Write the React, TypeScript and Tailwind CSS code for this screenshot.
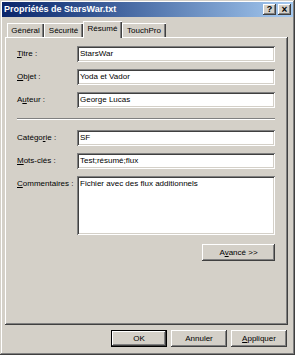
import React from 'react';

const RAISED = 'shadow-[inset_-1px_-1px_#404040,inset_1px_1px_#ffffff,inset_-2px_-2px_#808080]';
const SUNKEN = 'shadow-[inset_1px_1px_#808080,inset_-1px_-1px_#ffffff,inset_2px_2px_#404040,inset_-2px_-2px_#d4d0c8]';
const TAB = 'shadow-[inset_1px_1px_#ffffff,inset_-1px_0_#404040,inset_-2px_0_#808080]';

const FONT = { fontFamily: '"Liberation Sans", Arial, sans-serif' };

const Key = ({ c }: { c: string }) => <span className="underline underline-offset-[1px]">{c}</span>;

const Field = ({ label, value, tall }: { label: React.ReactNode; value: string; tall?: boolean }) => (
  <div className="flex">
    <div className={`w-[60px] shrink-0 whitespace-nowrap ${tall ? 'pt-[4px]' : 'h-[16px] flex items-center'}`}>{label}</div>
    <div className={`flex-1 bg-white ${SUNKEN} px-[3px] whitespace-nowrap ${tall ? 'h-[59px] pt-[4px]' : 'h-[16px] flex items-center'}`}>
      {value}
    </div>
  </div>
);

const Btn = ({ children, w, def }: { children: React.ReactNode; w: string; def?: boolean }) => (
  <div className={`${w} h-[17px] ${def ? 'border border-black' : ''}`}>
    <div className={`h-full w-full flex items-center justify-center ${RAISED}`}>{children}</div>
  </div>
);

export default function App() {
  const tabs = [
    { name: 'Général', w: 'w-[37px]' },
    { name: 'Sécurité', w: 'w-[39px]' },
    { name: 'Résumé', w: 'w-[39px]', active: true },
    { name: 'TouchPro', w: 'w-[44px]' },
  ];

  return (
    <div
      className="w-[295px] h-[355px] bg-[#d4d0c8] p-[2px] flex flex-col text-[8px] text-black leading-none shadow-[inset_-1px_-1px_#404040,inset_1px_1px_#d4d0c8,inset_-2px_-2px_#808080,inset_2px_2px_#ffffff]"
      style={FONT}
    >
      {/* title bar */}
      <div className="h-[15px] flex items-center justify-between pl-[2px] pr-[2px] bg-gradient-to-r from-[#0a246a] to-[#a6caf0]">
        <span className="text-white font-bold text-[9px]">Propriétés de StarsWar.txt</span>
        <div className="flex gap-[2px]">
          <div className={`w-[13px] h-[11px] bg-[#d4d0c8] ${RAISED} flex items-center justify-center font-bold text-[9px]`}>?</div>
          <div className={`w-[13px] h-[11px] bg-[#d4d0c8] ${RAISED} flex items-center justify-center font-bold text-[10px]`}>×</div>
        </div>
      </div>

      {/* tabs */}
      <div className="mt-[4px] ml-[3px] mr-[5px] h-[16px] flex items-end pl-[2px]">
        {tabs.map(t =>
          t.active ? (
            <div
              key={t.name}
              className={`relative z-10 ${t.w} h-[17px] -mb-px bg-[#d4d0c8] ${TAB} flex items-start justify-center pt-[4px]`}
            >
              {t.name}
            </div>
          ) : (
            <div key={t.name} className={`${t.w} h-[14px] ${TAB} flex items-center justify-center pt-[1px]`}>
              {t.name}
            </div>
          )
        )}
      </div>

      {/* panel */}
      <div className={`ml-[3px] mr-[5px] h-[288px] ${RAISED} pl-[12px] pr-[13px] pt-[9px] flex flex-col`}>
        <div className="flex flex-col gap-[7px]">
          <Field label={<span><Key c="T" />itre :</span>} value="StarsWar" />
          <Field label={<span><Key c="O" />bjet :</span>} value="Yoda et Vador" />
          <Field label={<span>A<Key c="u" />teur :</span>} value="George Lucas" />
        </div>

        <div className="mt-[10px] h-[2px] border-t border-[#808080] border-b border-b-white" />

        <div className="mt-[10px] flex flex-col gap-[7px]">
          <Field label={<span>Catégo<Key c="r" />ie :</span>} value="SF" />
          <Field label={<span><Key c="M" />ots-clés :</span>} value="Test;résumé;flux" />
          <Field label={<span><Key c="C" />ommentaires :</span>} value="Fichier avec des flux additionnels" tall />
        </div>

        <div className="mt-[9px] flex justify-end">
          <Btn w="w-[73px]">
            <span>A<Key c="v" />ancé &gt;&gt;</span>
          </Btn>
        </div>
      </div>

      {/* bottom buttons */}
      <div className="mt-[5px] mr-[6px] flex justify-end gap-[4px]">
        <Btn w="w-[56px]" def>OK</Btn>
        <Btn w="w-[56px]">Annuler</Btn>
        <Btn w="w-[56px]">
          <span><Key c="A" />ppliquer</span>
        </Btn>
      </div>
    </div>
  );
}
